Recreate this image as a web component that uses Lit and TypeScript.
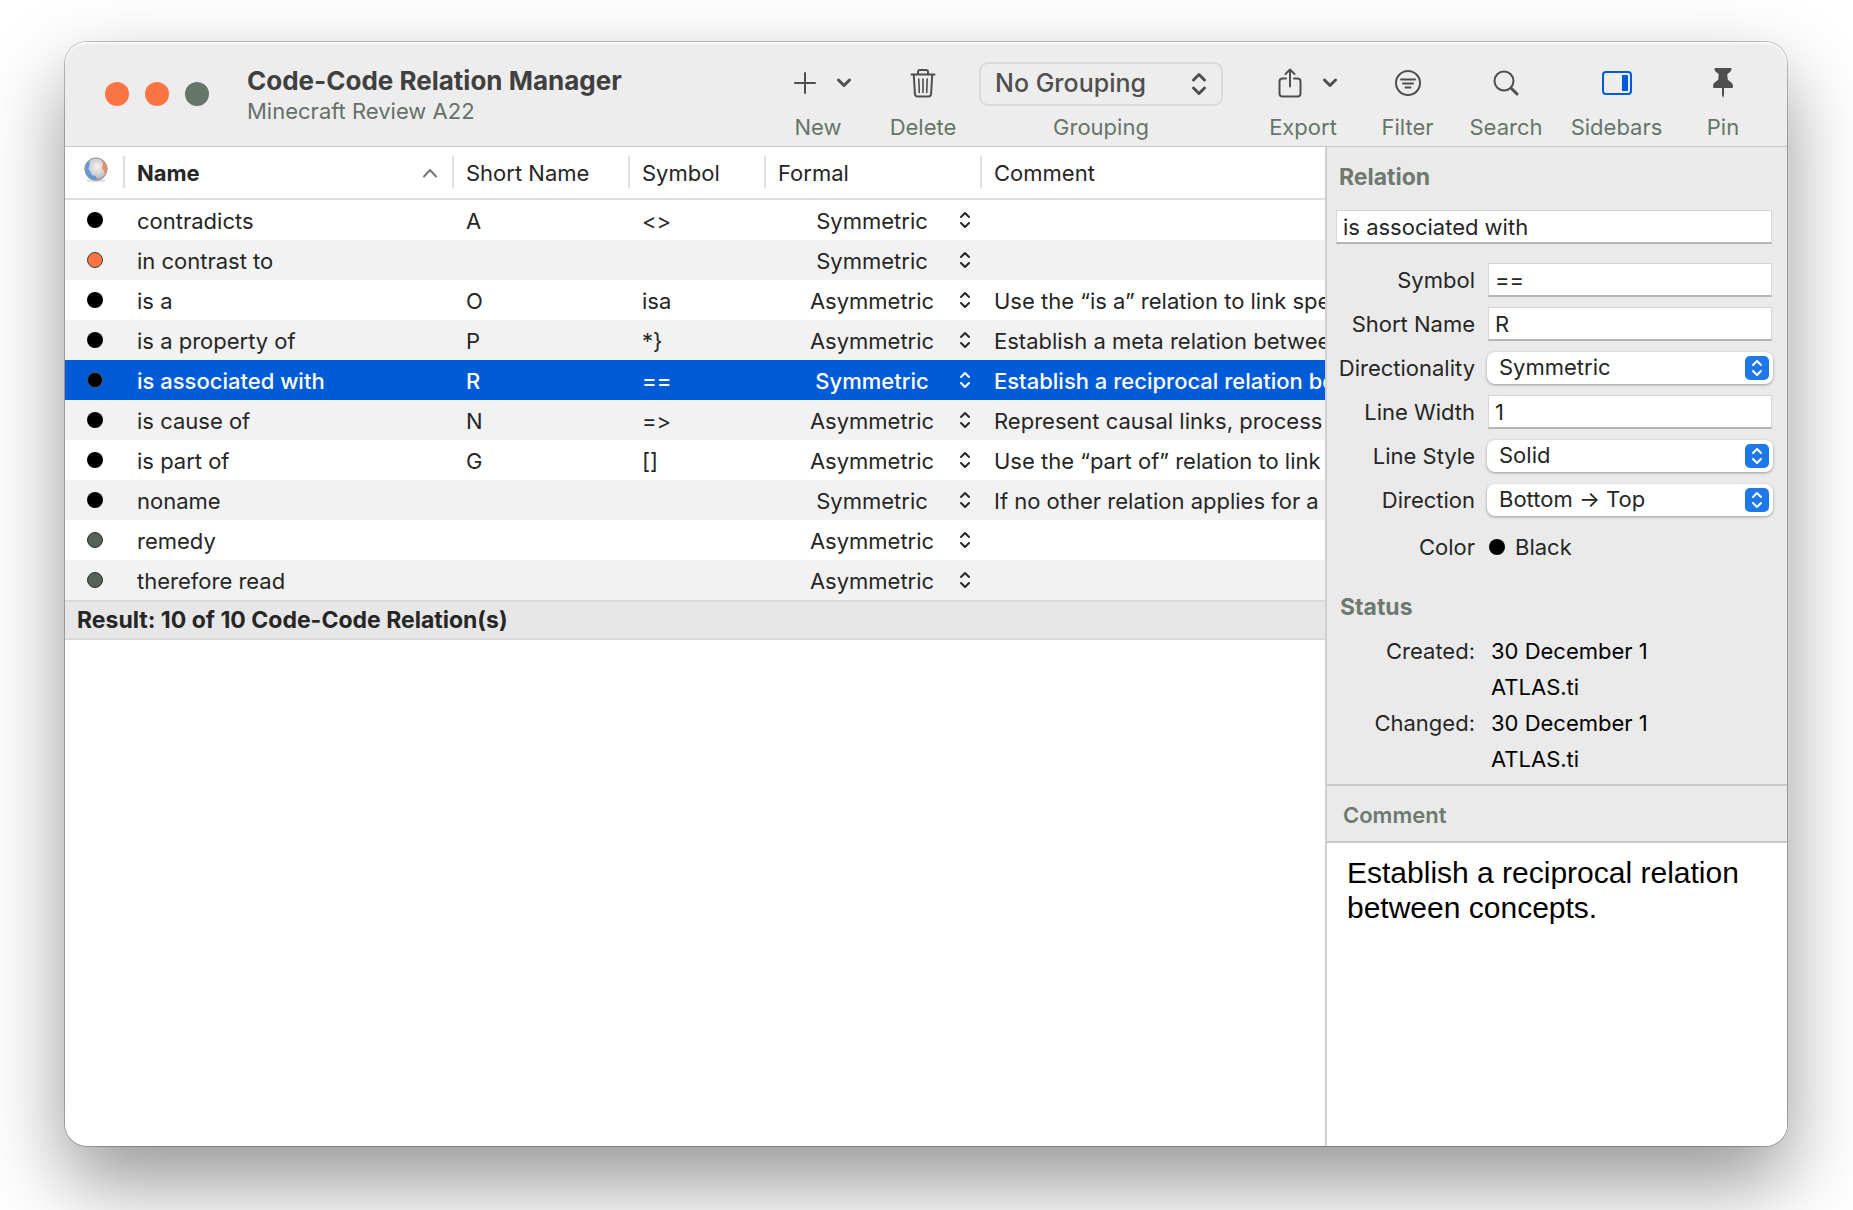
import { LitElement, html, css, svg, nothing } from "lit";
import { customElement, state } from "lit/decorators.js";
import { classMap } from "lit/directives/class-map.js";

type Formal = "Symmetric" | "Asymmetric";

interface Relation {
  name: string;
  short: string;
  symbol: string;
  formal: Formal;
  comment: string;
  color: "black" | "orange" | "green";
}

const RELATIONS: Relation[] = [
  { name: "contradicts", short: "A", symbol: "<>", formal: "Symmetric", comment: "", color: "black" },
  { name: "in contrast to", short: "", symbol: "", formal: "Symmetric", comment: "", color: "orange" },
  { name: "is a", short: "O", symbol: "isa", formal: "Asymmetric", comment: "Use the “is a” relation to link spe", color: "black" },
  { name: "is a property of", short: "P", symbol: "*}", formal: "Asymmetric", comment: "Establish a meta relation betwee", color: "black" },
  { name: "is associated with", short: "R", symbol: "==", formal: "Symmetric", comment: "Establish a reciprocal relation be", color: "black" },
  { name: "is cause of", short: "N", symbol: "=>", formal: "Asymmetric", comment: "Represent causal links, process", color: "black" },
  { name: "is part of", short: "G", symbol: "[]", formal: "Asymmetric", comment: "Use the “part of” relation to link", color: "black" },
  { name: "noname", short: "", symbol: "", formal: "Symmetric", comment: "If no other relation applies for a", color: "black" },
  { name: "remedy", short: "", symbol: "", formal: "Asymmetric", comment: "", color: "green" },
  { name: "therefore read", short: "", symbol: "", formal: "Asymmetric", comment: "", color: "green" },
];

const chevronDown = svg`<svg width="16" height="10" viewBox="0 0 16 10" fill="none" stroke="currentColor" stroke-width="3" stroke-linecap="round" stroke-linejoin="round" aria-hidden="true"><path d="M2.5 2 8 7.5 13.5 2"/></svg>`;

const icons = {
  plus: svg`<svg width="22" height="22" viewBox="0 0 22 22" fill="none" stroke="currentColor" stroke-width="2" stroke-linecap="round" aria-hidden="true"><path d="M11 1v20M1 11h20"/></svg>`,
  trash: svg`<svg width="26" height="30" viewBox="0 0 26 30" fill="none" stroke="currentColor" stroke-width="2" stroke-linecap="round" stroke-linejoin="round" aria-hidden="true"><path d="M1.5 6.500h23"/><path d="M8 6V4a2 2 0 0 1 2-2h6a2 2 0 0 1 2 2v2"/><path d="M3.800 7l1.100 19a2.500 2.500 0 0 0 2.500 2.500h11.200a2.500 2.500 0 0 0 2.500-2.500L22.200 7"/><path stroke-width="1.6" d="M8.800 11l.5 13.500M13 11v13.500M17.200 11l-.5 13.500"/></svg>`,
  share: svg`<svg width="24" height="30" viewBox="0 0 24 30" fill="none" stroke="currentColor" stroke-width="2" stroke-linecap="round" stroke-linejoin="round" aria-hidden="true"><path d="M8 10.500H4.500A3 3 0 0 0 1.500 13.500v12a3 3 0 0 0 3 3h15a3 3 0 0 0 3-3v-12a3 3 0 0 0-3-3H16"/><path d="M12 18.500V2M7.500 6 12 1.500 16.500 6"/></svg>`,
  filter: svg`<svg width="28" height="28" viewBox="0 0 28 28" fill="none" stroke="currentColor" stroke-width="2" stroke-linecap="round" aria-hidden="true"><circle cx="14" cy="14" r="12"/><path d="M7 10.500h14M9 14.500h10M11.500 18.500h5"/></svg>`,
  search: svg`<svg width="26" height="26" viewBox="0 0 26 26" fill="none" stroke="currentColor" stroke-width="2" stroke-linecap="round" aria-hidden="true"><circle cx="11" cy="11" r="9.500"/><path stroke-width="3" d="M18.200 18.200 24 24"/></svg>`,
  sidebars: svg`<svg width="30" height="24" viewBox="0 0 30 24" fill="none" stroke="#005bdb" stroke-width="2" aria-hidden="true"><rect x="1" y="1" width="28" height="22" rx="3"/><rect x="20" y="4" width="6" height="16" fill="#005bdb" stroke="none"/></svg>`,
  pin: svg`<svg width="22" height="30" viewBox="0 0 22 30" fill="currentColor" aria-hidden="true"><path d="M3.500 0h15c.7 0 1 .4 1 1 0 2-1.500 3.200-3.500 4.500-.6.400-.8.900-.7 1.500l.4 4c.1.800.4 1.200 1 1.600 2.600 1.400 4.300 3.400 4.300 5.900 0 1-.5 1.500-1.500 1.500h-17C1.500 20 1 19.500 1 18.500c0-2.500 1.700-4.500 4.300-5.900.6-.4.9-.8 1-1.600l.4-4c.1-.6-.1-1.100-.7-1.500C4 4.200 2.500 3 2.500 1c0-.6.300-1 1-1z"/><path d="M10 19h2v8l-1 3-1-3z"/></svg>`,
  sort: svg`<svg width="16" height="10" viewBox="0 0 16 10" fill="none" stroke="#777" stroke-width="2" stroke-linecap="round" stroke-linejoin="round" aria-hidden="true"><path d="M2 8.500 8 2l6 6.500"/></svg>`,
  globe: svg`<svg width="24" height="26" viewBox="0 0 24 26" aria-hidden="true">
    <defs>
      <radialGradient id="ball" cx=".55" cy=".4" r=".65"><stop offset="0" stop-color="#f4f4f4"/><stop offset=".65" stop-color="#c8c8c8"/><stop offset="1" stop-color="#8c8c8c"/></radialGradient>
      <clipPath id="disc"><circle cx="12" cy="12" r="11"/></clipPath>
    </defs>
    <ellipse cx="12" cy="23.500" rx="10" ry="1.500" fill="#dcdcdc"/>
    <circle cx="12" cy="12" r="11.500" fill="url(#ball)"/>
    <g clip-path="url(#disc)">
      <path fill="#3f92ee" opacity=".8" d="M2 5 6 4 5.500 8 4.500 12l2 3 1 3 4 1 2 4-5 1L2 19 1 12z"/>
      <path fill="#f98055" opacity=".9" d="M17 2l3 2 3 5v6l-2 3-1-4-2-3 1-4z"/>
    </g>
    <circle cx="12" cy="12" r="11" fill="none" stroke="#999"/>
  </svg>`,
};

const upDown = (kind: "large" | "small") =>
  kind === "large"
    ? svg`<svg class="updown" width="16" height="24" viewBox="0 0 16 24" fill="none" stroke="currentColor" stroke-width="3" stroke-linecap="round" stroke-linejoin="round" aria-hidden="true"><path d="M2.500 8 8 2.500 13.500 8M2.500 16 8 21.500 13.500 16"/></svg>`
    : svg`<svg class="updown" width="12" height="18" viewBox="0 0 12 18" fill="none" stroke="currentColor" stroke-width="2" stroke-linecap="round" stroke-linejoin="round" aria-hidden="true"><path d="M2 6 6 2l4 4M2 12l4 4 4-4"/></svg>`;

@customElement("app-root")
export class AppRoot extends LitElement {
  @state() private selected = 4;

  static styles = css`
    :host {
      display: flex;
      box-sizing: border-box;
      min-height: 100vh;
      padding: 42px 66px 64px 65px;
      background: #fff;
      color: #262626;
      font: 22px/28px Inter, "Liberation Sans", sans-serif;
      font-variant-ligatures: none;
      overflow: hidden;
    }
    *, *::before, *::after { box-sizing: border-box; }
    button, input, select, textarea {
      font: inherit;
      font-variant-ligatures: none;
      color: inherit;
      margin: 0;
      border: 0;
      padding: 0;
      background: none;
      outline: none;
      appearance: none;
      border-radius: 0;
    }
    svg { display: block; flex: none; }
    h1, h2, p, dl, dd { margin: 0; font-size: inherit; }

    .window {
      flex: 1;
      min-width: 0;
      display: flex;
      flex-direction: column;
      border-radius: 22px;
      background: #fff;
      box-shadow: 0 0 0 1px rgba(0, 0, 0, 0.24), 0 36px 80px rgba(0, 0, 0, 0.42);
    }

    .titlebar {
      display: flex;
      height: 105px;
      border-bottom: 1px solid #c8c8c8;
      border-radius: 22px 22px 0 0;
      background: #ededed;
      box-shadow: inset 0 2px 0 #f8f8f8;
    }
    .lights { display: flex; gap: 16px; padding: 40px 0 0 40px; }
    .light { width: 24px; height: 24px; border-radius: 50%; background: #fa7543; }
    .light.zoom { background: #66756a; }
    .titles { flex: 1; padding: 23px 0 0 38px; white-space: nowrap; }
    .title { font-size: 26px; line-height: 32px; font-weight: 700; color: #404040; }
    .subtitle { color: #66706a; }

    .tools {
      display: grid;
      grid-template-columns: 124px 86px 270px 134px 75px 122px 99px 114px;
      padding: 20px 7px 0 0;
      color: #4f4f4f;
    }
    .tool {
      display: flex;
      flex-direction: column;
      align-items: center;
      gap: 6px;
    }
    .pic {
      display: flex;
      align-items: center;
      justify-content: center;
      gap: 20px;
      height: 44px;
      padding-bottom: 2px;
    }
    .pic.menu { padding-left: 10px; }
    .caption { color: #66756a; line-height: 30px; }
    .grouping { display: grid; width: 244px; height: 44px; }
    .grouping > * { grid-area: 1 / 1; }
    .grouping select {
      width: 100%;
      height: 100%;
      padding: 0 48px 2px 14px;
      border: 2px solid #dadada;
      border-radius: 9px;
      font-size: 25px;
      font-weight: 500;
    }
    .grouping .updown { place-self: center end; margin-right: 16px; pointer-events: none; }

    .body { flex: 1; display: flex; min-height: 0; }
    .list { flex: 1; min-width: 0; overflow: hidden; }
    .relations {
      width: 100%;
      table-layout: fixed;
      border-collapse: separate;
      border-spacing: 0;
    }
    .c-color { width: 58px; }
    .c-name { width: 329px; }
    .c-short { width: 176px; }
    .c-symbol { width: 136px; }
    .c-formal { width: 216px; }
    .relations th {
      height: 53px;
      padding: 0 14px;
      border-bottom: 2px solid #dedede;
      text-align: left;
      font-weight: 400;
      background: linear-gradient(#dfdfdf, #dfdfdf) 0 9px / 2px 32px no-repeat;
    }
    .relations th:first-child { background: none; }
    .relations th.sorted { font-weight: 700; }
    .relations th:first-child, .relations td:first-child { padding: 0 0 0 19px; }
    .relations th:first-child { padding-bottom: 6px; }
    .head { display: flex; align-items: center; justify-content: space-between; }
    .relations td {
      height: 40px;
      padding: 2px 0 0 14px;
      white-space: nowrap;
      overflow: hidden;
    }
    .relations td.formal { padding: 0; }
    .relations tr.alt { background: #f2f2f2; }
    .relations tr.on { background: #005bd7; color: #fff; font-weight: 500; }
    .dot { width: 16px; height: 16px; margin-left: 3px; border-radius: 50%; background: #000; }
    .dot.orange { background: #fa7543; border: 1px solid #404040; }
    .dot.green { background: #556159; border: 1px solid #303030; }
    .on .dot { border: 1px solid #555; }
    .pick { display: grid; align-items: center; }
    .pick > * { grid-area: 1 / 1; }
    .pick select { width: 100%; height: 40px; padding-top: 2px; text-align: center; text-align-last: center; }
    .pick .updown { justify-self: end; margin-right: 9px; pointer-events: none; }
    .result {
      height: 40px;
      padding: 0 12px;
      border: solid #d9d9d9;
      border-width: 2px 0;
      background: #e7e7e7;
      font-size: 23px;
      font-weight: 700;
      line-height: 36px;
    }

    .side {
      width: 462px;
      display: flex;
      flex-direction: column;
      border-left: 2px solid #cfcfcf;
      background: #eaeaea;
      border-radius: 0 0 22px 0;
    }
    .section { color: #6e7970; font-size: 23px; font-weight: 700; line-height: 28px; }
    .relation { padding: 16px 15px 0 9px; }
    .relation .section { padding-left: 3px; }
    .field {
      width: 100%;
      height: 34px;
      padding: 0 6px;
      border: 1px solid #d6d6d6;
      border-bottom: 2px solid #b4b4b4;
      background: #fff;
    }
    .relation > .field { margin-top: 19px; }
    .form { display: grid; grid-template-columns: 139px 1fr; column-gap: 13px; margin-top: 14px; }
    .form label, .form .label { justify-self: end; white-space: nowrap; line-height: 44px; height: 44px; }
    .cell { display: grid; align-items: center; height: 44px; }
    .popup { display: grid; align-items: center; margin: 0 -1px; }
    .popup > * { grid-area: 1 / 1; }
    .popup select {
      width: 100%;
      height: 32px;
      padding: 0 40px 2px 12px;
      border-radius: 8px;
      background: #fff;
      box-shadow: 0 1px 3px rgba(0, 0, 0, 0.35);
    }
    .badge {
      justify-self: end;
      display: grid;
      place-items: center;
      width: 24px;
      height: 24px;
      margin-right: 4px;
      border-radius: 5px;
      background: #1f78e8;
      color: #fff;
      pointer-events: none;
    }
    .color-row { display: flex; align-items: center; gap: 10px; height: 50px; }
    .color-row .dot { margin-left: 1px; }
    .form .label { line-height: 50px; height: 50px; }
    .status { padding: 21px 15px 7px 13px; }
    .stamps { display: grid; grid-template-columns: 135px 1fr; column-gap: 16px; margin-top: 12px; line-height: 36px; }
    .stamps dt { text-align: right; }
    .stamps dd { color: #000; }
    .note-head {
      height: 59px;
      padding: 15px 16px;
      border: solid #c9c9c9;
      border-width: 2px 0;
      font-size: 22px;
      font-weight: 600;
    }
    .note {
      flex: 1;
      padding: 12px 20px;
      background: #fff;
      border-radius: 0 0 22px 0;
      color: #000;
      font: 30px/35px "Liberation Sans", Arial, sans-serif;
      resize: none;
    }
  `;

  private formalPick(r: Relation) {
    return html`<div class="pick">
      <select aria-label="Formal property of ${r.name}">
        ${["Symmetric", "Asymmetric"].map((o) => html`<option ?selected=${o === r.formal}>${o}</option>`)}
      </select>
      ${upDown("small")}
    </div>`;
  }

  private tool(label: string, pic: unknown, menu = false) {
    return html`<button class="tool" type="button">
      <span class=${classMap({ pic: true, menu })}>${pic}${menu ? chevronDown : nothing}</span>
      <span class="caption">${label}</span>
    </button>`;
  }

  private textRow(id: string, label: string, value: string) {
    return html`<label for=${id}>${label}</label>
      <div class="cell"><input class="field" id=${id} type="text" .value=${value} /></div>`;
  }

  private popupRow(id: string, label: string, options: string[]) {
    return html`<label for=${id}>${label}</label>
      <div class="cell">
        <div class="popup">
          <select id=${id}>${options.map((o) => html`<option>${o}</option>`)}</select>
          <span class="badge">${upDown("small")}</span>
        </div>
      </div>`;
  }

  render() {
    return html`
      <main class="window">
        <header class="titlebar">
          <div class="lights">
            <button class="light" type="button" aria-label="Close"></button>
            <button class="light" type="button" aria-label="Minimize"></button>
            <button class="light zoom" type="button" aria-label="Zoom"></button>
          </div>
          <div class="titles">
            <h1 class="title">Code-Code Relation Manager</h1>
            <p class="subtitle">Minecraft Review A22</p>
          </div>
          <div class="tools">
            ${this.tool("New", icons.plus, true)}
            ${this.tool("Delete", icons.trash)}
            <div class="tool">
              <div class="grouping">
                <select id="grouping"><option>No Grouping</option></select>
                ${upDown("large")}
              </div>
              <label class="caption" for="grouping">Grouping</label>
            </div>
            ${this.tool("Export", icons.share, true)}
            ${this.tool("Filter", icons.filter)}
            ${this.tool("Search", icons.search)}
            ${this.tool("Sidebars", icons.sidebars)}
            ${this.tool("Pin", icons.pin)}
          </div>
        </header>
        <div class="body">
          <section class="list">
            <table class="relations">
              <colgroup>
                <col class="c-color" /><col class="c-name" /><col class="c-short" />
                <col class="c-symbol" /><col class="c-formal" /><col />
              </colgroup>
              <thead>
                <tr>
                  <th scope="col" aria-label="Color">${icons.globe}</th>
                  <th scope="col" class="sorted" aria-sort="ascending"><div class="head">Name ${icons.sort}</div></th>
                  <th scope="col">Short Name</th>
                  <th scope="col">Symbol</th>
                  <th scope="col">Formal</th>
                  <th scope="col">Comment</th>
                </tr>
              </thead>
              <tbody>
                ${RELATIONS.map(
                  (r, i) => html`<tr
                    class=${classMap({ alt: i % 2 === 1, on: i === this.selected })}
                    @click=${() => (this.selected = i)}
                  >
                    <td><div class="dot ${r.color}"></div></td>
                    <td>${r.name}</td>
                    <td>${r.short}</td>
                    <td>${r.symbol}</td>
                    <td class="formal">${this.formalPick(r)}</td>
                    <td>${r.comment}</td>
                  </tr>`
                )}
              </tbody>
            </table>
            <div class="result">Result: 10 of 10 Code-Code Relation(s)</div>
          </section>
          <aside class="side">
            <section class="relation">
              <h2 class="section">Relation</h2>
              <input class="field" type="text" aria-label="Relation name" .value=${"is associated with"} />
              <div class="form">
                ${this.textRow("symbol", "Symbol", "==")}
                ${this.textRow("short", "Short Name", "R")}
                ${this.popupRow("directionality", "Directionality", ["Symmetric", "Asymmetric"])}
                ${this.textRow("width", "Line Width", "1")}
                ${this.popupRow("style", "Line Style", ["Solid"])}
                ${this.popupRow("direction", "Direction", ["Bottom → Top"])}
                <span class="label">Color</span>
                <div class="color-row"><span class="dot"></span>Black</div>
              </div>
            </section>
            <section class="status">
              <h2 class="section">Status</h2>
              <dl class="stamps">
                <dt>Created:</dt>
                <dd>30 December 1<br />ATLAS.ti</dd>
                <dt>Changed:</dt>
                <dd>30 December 1<br />ATLAS.ti</dd>
              </dl>
            </section>
            <h2 class="section note-head">Comment</h2>
            <textarea class="note" aria-label="Comment" .value=${"Establish a reciprocal relation between concepts."}></textarea>
          </aside>
        </div>
      </main>
    `;
  }
}
